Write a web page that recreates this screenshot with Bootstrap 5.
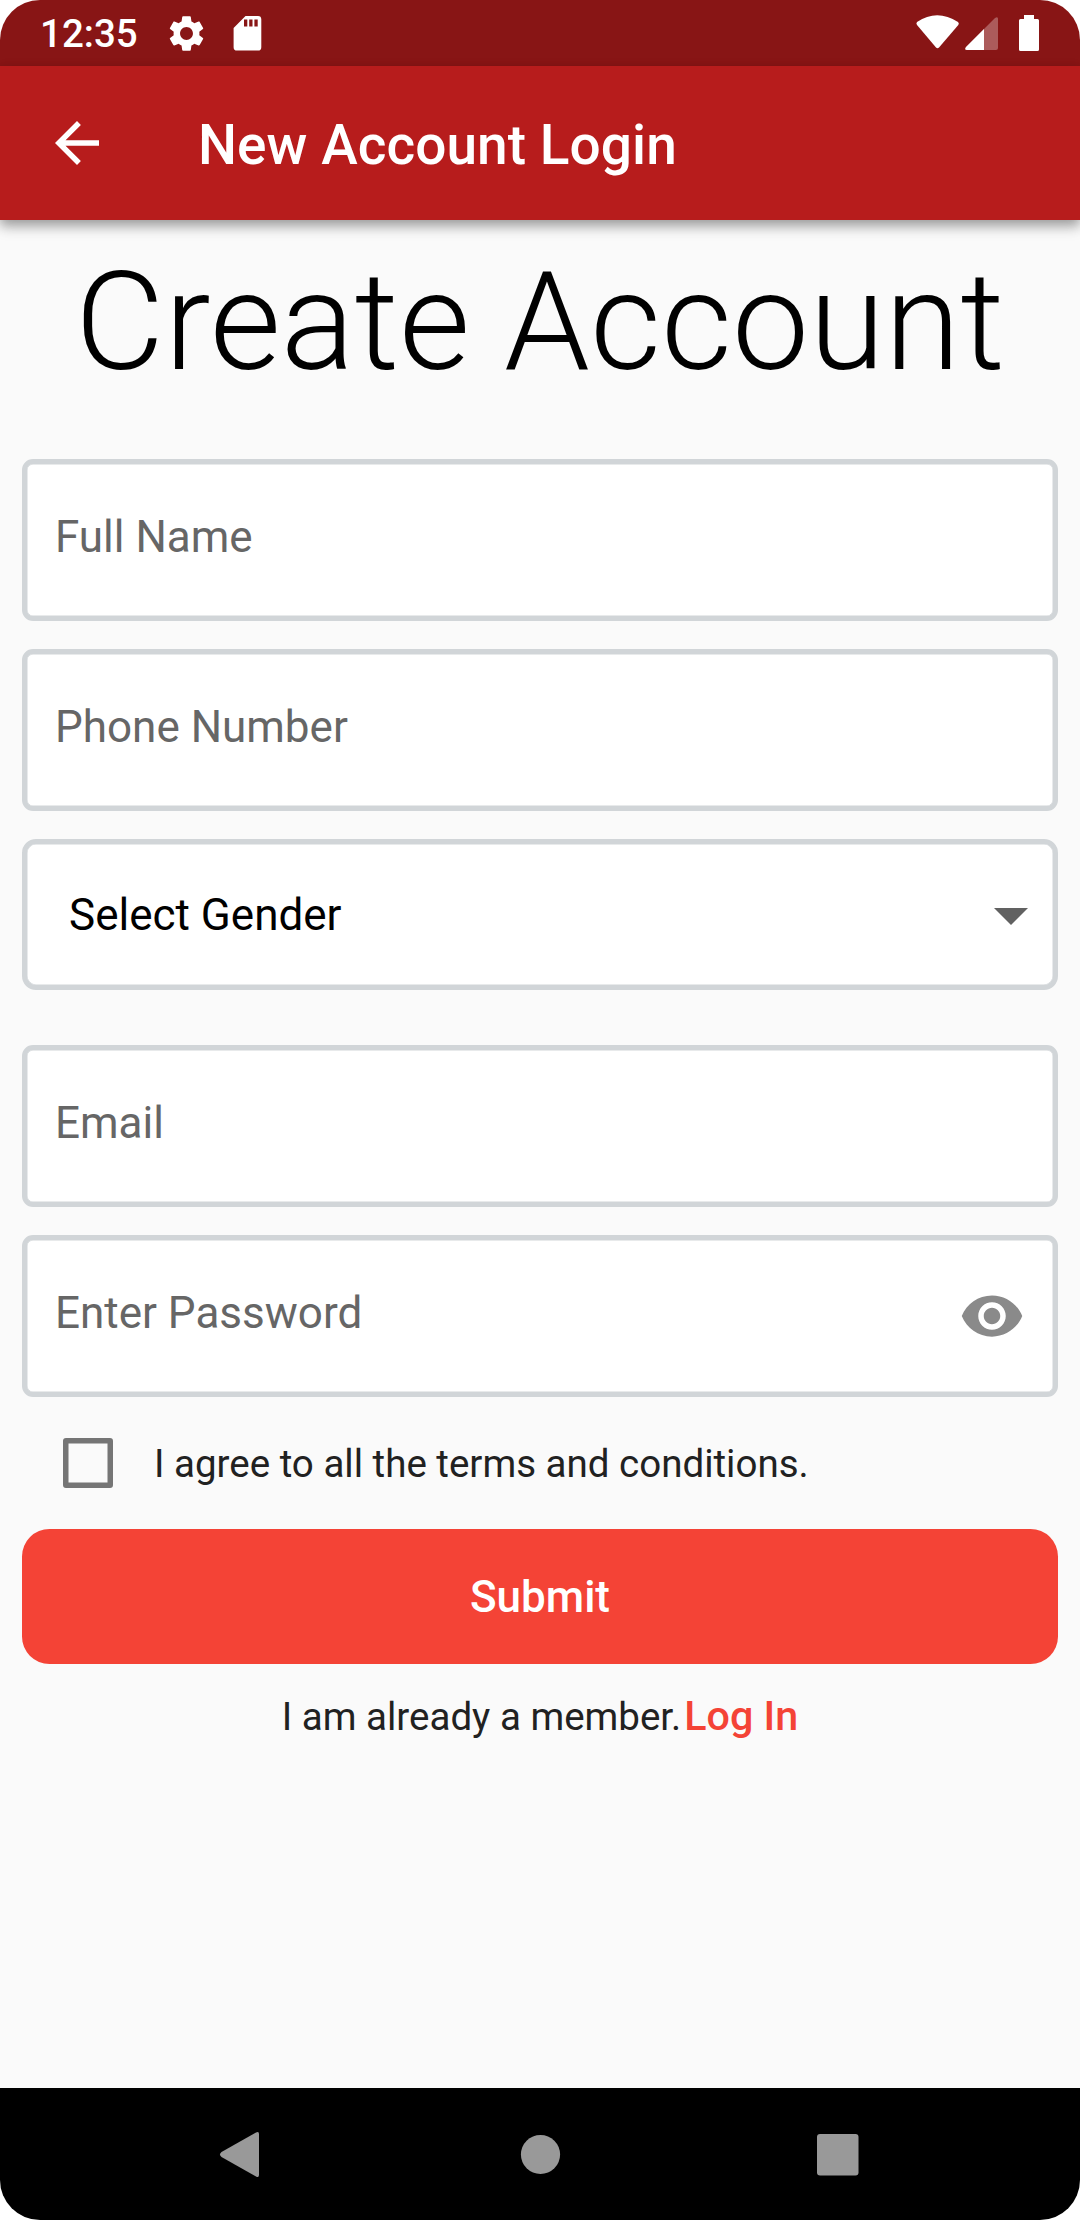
<!DOCTYPE html>
<html lang="en">
<head>
<meta charset="utf-8">
<meta name="viewport" content="width=device-width, initial-scale=1">
<title>New Account Login</title>
<link href="https://cdn.jsdelivr.net/npm/bootstrap@5.3.0/dist/css/bootstrap.min.css" rel="stylesheet">
<style>
  body { font-family: Roboto, sans-serif; background: #fff; color: #212121; }
  .phone { width: 1080px; height: 2220px; border-radius: 40px; background: #fafafa; }
  .status-bar { height: 66px; background: #881515; padding: 0 40px; }
  .clock { font-size: 38.5px; font-weight: 500; line-height: 66px; padding-top: 2px; width: 125px; }
  .sd-icon { margin-left: 18px; }
  .app-bar { height: 154px; background: #b71c1c; padding: 0 44px; box-shadow: 0 5px 11px rgba(0,0,0,.3), 0 8px 14px rgba(0,0,0,.12); z-index: 1; }
  .app-title { font-size: 55px; font-weight: 500; line-height: 64px; margin-left: 88px; padding-top: 3px; letter-spacing: .05px; }
  .screen { padding: 0 22px; }
  .headline { font-size: 137.5px; font-weight: 300; line-height: 160px; letter-spacing: .12px; margin-top: 22px; height: 217px; color: #000; white-space: nowrap; }
  .field-box { height: 162px; border: 5px solid #d1d5d8; border-radius: 11px; background: #fff; box-shadow: inset 0 0 0 .5px #d1d5d8; padding: 0 28px 6px 28px; margin-bottom: 28px; }
  .field-box .form-control { font-size: 44px; line-height: 56px; color: #000; }
  .field-box .form-control::placeholder { color: #666; opacity: 1; }
  .gender-box { height: 151px; border-radius: 14px; padding: 0 25px 0 42px; font-size: 44px; color: #000; margin-bottom: 55px; }
  .eye-icon { margin-top: 6px; }
  .agree-row { height: 132px; padding-left: 41px; font-size: 38.5px; }
  .agree-row .form-check-input { width: 50px; height: 50px; border: 5px solid #757575; box-shadow: inset 0 0 0 .5px #757575; border-radius: 3px; background: transparent; }
  .agree-row label { margin-left: 41px; line-height: 46px; padding-top: 2px; }
  .submit-btn { height: 135px; border-radius: 27.5px; background: #f44336; color: #fff; font-size: 44px; font-weight: 500; }
  .member-row { font-size: 38.5px; line-height: 50px; margin-top: 27px; }
  .member-row a { color: #f44336; font-size: 41.25px; font-weight: 500; margin-left: 3px; }
  .nav-keys { height: 132px; background: #000; }
</style>
</head>
<body>
<div class="phone d-flex flex-column overflow-hidden">
  <div class="status-bar d-flex align-items-center text-white flex-shrink-0">
    <span class="clock">12:35</span>
    <svg width="43" height="43" viewBox="0 0 24 24" fill="#fff"><path d="M19.140 12.940c.040-.300.060-.610.060-.940 0-.320-.020-.640-.070-.940l2.030-1.580c.180-.140.230-.410.120-.610l-1.920-3.320c-.120-.220-.370-.290-.590-.220l-2.390.960c-.500-.380-1.030-.700-1.620-.940l-.360-2.540c-.040-.240-.240-.410-.480-.410h-3.840c-.240 0-.430.170-.470.410l-.360 2.540c-.590.240-1.130.570-1.620.940l-2.390-.960c-.220-.080-.470 0-.590.220L2.740 8.870c-.120.210-.080.470.120.610l2.030 1.580c-.050.300-.090.630-.090.940s.020.640.070.940l-2.030 1.580c-.180.140-.230.410-.120.610l1.920 3.320c.120.220.370.290.590.220l2.390-.960c.500.380 1.030.700 1.620.940l.360 2.540c.050.240.240.410.480.410h3.840c.240 0 .440-.170.470-.410l.360-2.540c.590-.240 1.130-.560 1.620-.940l2.390.960c.220.080.470 0 .590-.220l1.920-3.320c.120-.220.070-.470-.120-.610l-2.010-1.580zM12 15.600c-1.980 0-3.600-1.620-3.600-3.600s1.620-3.600 3.600-3.600 3.600 1.620 3.600 3.600-1.620 3.600-3.600 3.600z"/></svg>
    <svg class="sd-icon" width="43" height="66" viewBox="226 0 43 66" fill="#fff"><path fill-rule="evenodd" d="M245.500 16H258Q261.300 16 261.300 19.400V47.200Q261.300 50.600 258 50.600H237Q233.600 50.600 233.600 47.200V28ZM244 19.500V26.500H247.300V19.500ZM249.200 19.500V26.500H252.500V19.500ZM254.400 19.500V26.500H257.700V19.500Z"/></svg>
    <svg class="ms-auto" width="130" height="66" viewBox="910 0 130 66" fill="#fff">
      <path d="M917 22Q937 8.500 958 22Q959.500 23.500 958.300 25L939 47.500Q937.500 49 936 47.500L917 25Q915.800 23.500 917 22Z"/>
      <path d="M966 47L995 18Q998 16 998 19V48Q998 50 996 50H967Q964 50 966 47Z" opacity=".3"/>
      <path d="M966 47L984 29V50H967Q964 50 966 47Z"/>
      <path d="M1024 15H1034V19H1037.500Q1039 19 1039 20.500V49.500Q1039 51 1037.500 51H1020.500Q1019 51 1019 49.500V20.500Q1019 19 1020.500 19H1024Z"/>
    </svg>
  </div>
  <header class="app-bar d-flex align-items-center text-white position-relative flex-shrink-0">
    <svg width="66" height="66" viewBox="0 0 24 24" fill="#fff"><path d="M20 11H7.830l5.590-5.590L12 4l-8 8 8 8 1.410-1.410L7.830 13H20v-2z"/></svg>
    <span class="app-title">New Account Login</span>
  </header>
  <main class="screen flex-grow-1">
    <h1 class="headline text-center mb-0">Create Account</h1>
    <form>
      <div class="field-box d-flex align-items-center"><input class="form-control border-0 p-0 bg-transparent" type="text" placeholder="Full Name"></div>
      <div class="field-box d-flex align-items-center"><input class="form-control border-0 p-0 bg-transparent" type="tel" placeholder="Phone Number"></div>
      <div class="field-box gender-box d-flex align-items-center justify-content-between">
        <span>Select Gender</span>
        <svg width="34" height="20" viewBox="0 0 34 20" fill="#616161"><path d="M0 3H34L17 20Z"/></svg>
      </div>
      <div class="field-box d-flex align-items-center"><input class="form-control border-0 p-0 bg-transparent" type="email" placeholder="Email"></div>
      <div class="field-box d-flex align-items-center mb-0">
        <input class="form-control border-0 p-0 bg-transparent" type="password" placeholder="Enter Password">
        <svg class="eye-icon flex-shrink-0" width="66" height="66" viewBox="0 0 24 24" fill="#8a8a8a"><path d="M12 4.500C7 4.500 2.730 7.610 1 12c1.730 4.390 6 7.500 11 7.500s9.270-3.110 11-7.500c-1.730-4.390-6-7.500-11-7.500zM12 17c-2.760 0-5-2.240-5-5s2.240-5 5-5 5 2.240 5 5-2.240 5-5 5zm0-8c-1.660 0-3 1.340-3 3s1.340 3 3 3 3-1.340 3-3-1.340-3-3-3z"/></svg>
      </div>
      <div class="agree-row d-flex align-items-center">
        <input class="form-check-input m-0 flex-shrink-0" type="checkbox" id="agree">
        <label for="agree">I agree to all the terms and conditions.</label>
      </div>
      <button type="button" class="submit-btn btn border-0 w-100 p-0">Submit</button>
    </form>
    <div class="member-row d-flex justify-content-center align-items-baseline">
      <span>I am already a member.</span><a href="#" class="text-decoration-none">Log In</a>
    </div>
  </main>
  <nav class="nav-keys flex-shrink-0">
    <svg class="d-block" width="1080" height="132" viewBox="0 2088 1080 132" fill="#999">
      <path d="M221.500 2152L256 2132.500Q259 2131 259 2134V2175Q259 2178 256 2176.500L221.500 2157Q218.500 2154.500 221.500 2152Z"/>
      <circle cx="540.500" cy="2154.500" r="19.600"/>
      <rect x="817" y="2134" width="41.500" height="41.500" rx="3"/>
    </svg>
  </nav>
</div>
<script src="https://cdn.jsdelivr.net/npm/bootstrap@5.3.0/dist/js/bootstrap.bundle.min.js"></script>
</body>
</html>
